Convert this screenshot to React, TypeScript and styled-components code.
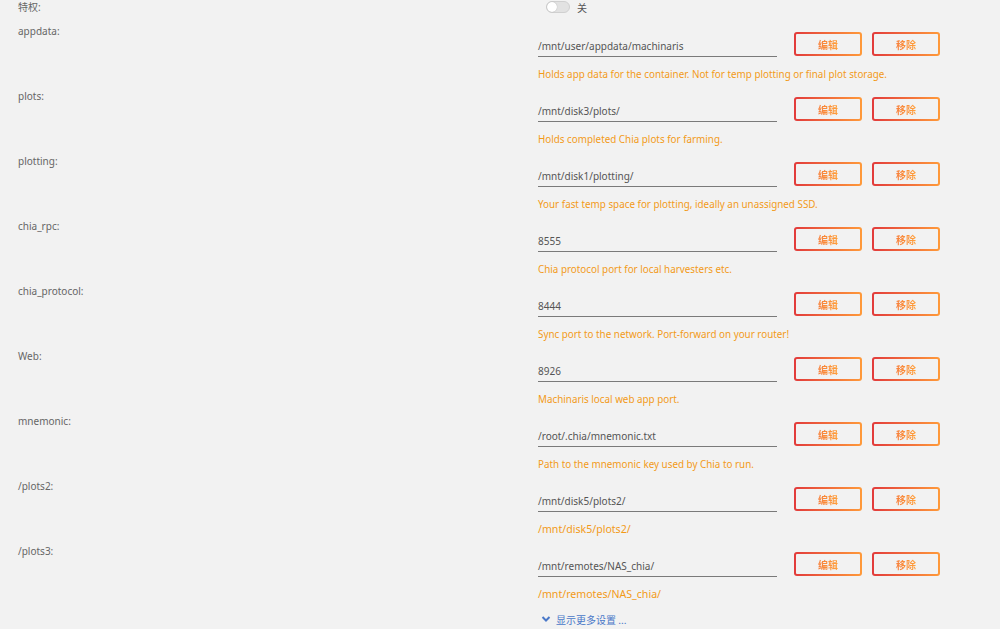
import React from "react";
import styled, { createGlobalStyle } from "styled-components";

const Global = createGlobalStyle`
  html, body { margin: 0; padding: 0; background: #f2f2f2; }
  body { font-family: "Noto Sans", "Noto Sans CJK SC", sans-serif; }
`;

const Page = styled.div`
  width: 1000px;
  height: 629px;
  overflow: hidden;
  background: #f2f2f2;
  padding-left: 18px;
  box-sizing: border-box;
`;

const Row = styled.div<{ $h: number }>`
  display: grid;
  grid-template-columns: 520px auto;
  height: ${(p) => p.$h}px;
`;

const Label = styled.div`
  font-size: 10px;
  line-height: 14px;
  color: #666;
`;

const ToggleWrap = styled.div`
  display: flex;
  align-items: center;
  gap: 7px;
  height: 14px;
  padding-left: 8px;
  font-size: 10px;
  color: #555;
  font-family: "Noto Sans CJK SC", sans-serif;
`;

const Track = styled.div`
  width: 22px;
  height: 10px;
  border-radius: 6px;
  background: #e2e2e2;
  border: 1px solid #d0d0d0;
  position: relative;
  box-sizing: content-box;
`;

const Knob = styled.div`
  position: absolute;
  left: 0;
  top: 0;
  width: 10px;
  height: 10px;
  border-radius: 50%;
  background: #fff;
  box-shadow: 0 0 1px rgba(0, 0, 0, 0.3);
`;

const Content = styled.div`
  display: flex;
  flex-direction: column;
`;

const Line = styled.div`
  display: flex;
  align-items: flex-end;
  height: 33px;
`;

const Input = styled.div`
  width: 239px;
  height: 32px;
  box-sizing: border-box;
  border-bottom: 1px solid #7a7a7a;
  font-size: 10px;
  line-height: 14px;
  padding-top: 14px;
  color: #555;
  margin-right: 17px;
`;

const Btn = styled.div`
  width: 68px;
  height: 24px;
  box-sizing: border-box;
  border: 2px solid transparent;
  border-radius: 3px;
  background: linear-gradient(#f2f2f2, #f2f2f2) padding-box,
    linear-gradient(90deg, #e23b3b, #ff9a3a) border-box;
  display: flex;
  align-items: center;
  justify-content: center;
  margin-right: 10px;
  margin-bottom: 1px;
`;

const BtnText = styled.span`
  font-family: "Noto Sans CJK SC", sans-serif;
  font-size: 10px;
  font-weight: 700;
  background: linear-gradient(90deg, #f77f3a, #ffa03c);
  -webkit-background-clip: text;
  background-clip: text;
  color: transparent;
`;

const Hint = styled.div<{ $path: boolean }>`
  margin-top: 10px;
  font-size: ${(p) => (p.$path ? "10.6px" : "9.85px")};
  line-height: 14px;
  color: #f29a18;
`;

const More = styled.div`
  display: flex;
  align-items: center;
  gap: 5px;
  margin-left: 520px;
  padding-left: 3px;
  height: 14px;
  margin-top: 3px;
  font-family: "Noto Sans CJK SC", sans-serif;
  font-size: 10px;
  color: #4a78c8;
`;

const rows = [
  ["appdata:", "/mnt/user/appdata/machinaris", "Holds app data for the container. Not for temp plotting or final plot storage."],
  ["plots:", "/mnt/disk3/plots/", "Holds completed Chia plots for farming."],
  ["plotting:", "/mnt/disk1/plotting/", "Your fast temp space for plotting, ideally an unassigned SSD."],
  ["chia_rpc:", "8555", "Chia protocol port for local harvesters etc."],
  ["chia_protocol:", "8444", "Sync port to the network. Port-forward on your router!"],
  ["Web:", "8926", "Machinaris local web app port."],
  ["mnemonic:", "/root/.chia/mnemonic.txt", "Path to the mnemonic key used by Chia to run."],
  ["/plots2:", "/mnt/disk5/plots2/", "/mnt/disk5/plots2/"],
  ["/plots3:", "/mnt/remotes/NAS_chia/", "/mnt/remotes/NAS_chia/"],
];

export default function App() {
  return (
    <Page>
      <Global />
      <Row $h={24}>
        <Label>特权:</Label>
        <ToggleWrap>
          <Track>
            <Knob />
          </Track>
          <span>关</span>
        </ToggleWrap>
      </Row>
      {rows.map(([l, v, h]) => (
        <Row $h={65} key={l}>
          <Label>{l}</Label>
          <Content>
            <Line>
              <Input>{v}</Input>
              <Btn>
                <BtnText>编辑</BtnText>
              </Btn>
              <Btn>
                <BtnText>移除</BtnText>
              </Btn>
            </Line>
            <Hint $path={h.startsWith("/")}>{h}</Hint>
          </Content>
        </Row>
      ))}
      <More>
        <svg width="10" height="8" viewBox="0 0 10 8">
          <path d="M1.5 2 L5 5.5 L8.5 2" stroke="#4a78c8" strokeWidth="2" fill="none" />
        </svg>
        <span>显示更多设置 ...</span>
      </More>
    </Page>
  );
}
